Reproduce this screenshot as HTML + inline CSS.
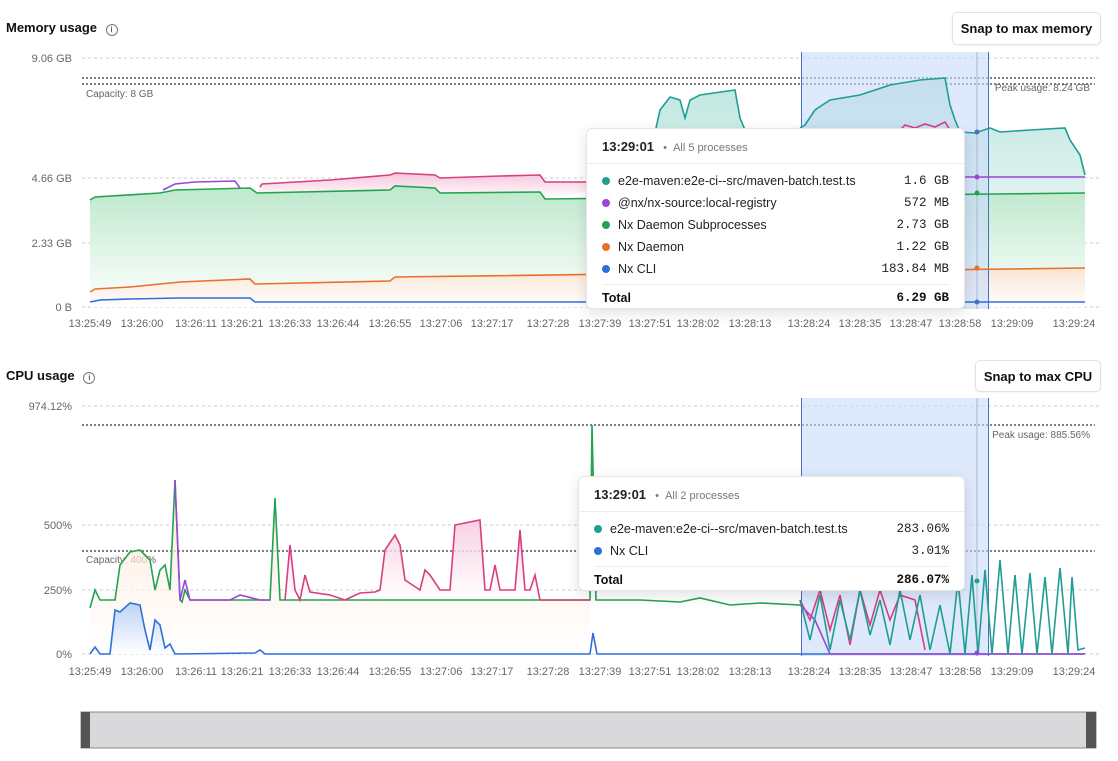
<!DOCTYPE html>
<html><head><meta charset="utf-8"><style>
body{margin:0;width:1118px;height:761px;background:#fff;font-family:"Liberation Sans",sans-serif;position:relative;overflow:hidden;color:#111}
.t{position:absolute;font-weight:bold;font-size:13px}
.btn{position:absolute;border:1px solid #e2e2e6;border-radius:5px;font-weight:bold;font-size:13px;display:flex;align-items:center;justify-content:center;background:#fff;box-shadow:0 1px 2px rgba(0,0,0,.05)}
.tip{position:absolute;background:#fff;border:1px solid #e6e6ea;border-radius:6px;box-shadow:0 4px 14px rgba(0,0,0,.12);font-size:12.5px}
.tip .h{padding:10px 15px 9px;border-bottom:1px solid #eee;font-size:11px;color:#777}
.tip .h b{color:#222;font-size:13px;margin-right:6px}
.row{display:flex;justify-content:space-between;padding:0 15px;height:22px;align-items:center;color:#222}
.row span.v{font-family:"Liberation Mono",monospace}
.dot{display:inline-block;width:8px;height:8px;border-radius:50%;margin-right:8px;vertical-align:0}
.tot{display:flex;justify-content:space-between;margin:4px 15px 0;border-top:1px solid #eee;padding-top:6px;font-weight:bold}
.tot span.v{font-family:"Liberation Mono",monospace}
svg text{font-family:"Liberation Sans",sans-serif;font-size:11px;fill:#666}
.ic{display:inline-block;width:10px;height:10px;border:1px solid #777;border-radius:50%;font-size:8px;text-align:center;line-height:10px;font-weight:normal;margin-left:5px;vertical-align:0px}
</style></head><body>
<div class="t" style="left:6px;top:20px">Memory usage <span class="ic">i</span></div>
<div class="btn" style="left:952px;top:12px;width:147px;height:31px">Snap to max memory</div>
<div class="t" style="left:6px;top:368px">CPU usage <span class="ic">i</span></div>
<div class="btn" style="left:975px;top:360px;width:124px;height:30px">Snap to max CPU</div>

<svg width="1118" height="761" style="position:absolute;left:0;top:0">
<defs>
<linearGradient id="gg" x1="0" y1="0" x2="0" y2="1"><stop offset="0" stop-color="#bde8cc"/><stop offset="1" stop-color="#fff"/></linearGradient>
<linearGradient id="go" x1="0" y1="0" x2="0" y2="1"><stop offset="0" stop-color="#fde0cc"/><stop offset="1" stop-color="#fff"/></linearGradient>
<linearGradient id="gt" x1="0" y1="0" x2="0" y2="1"><stop offset="0" stop-color="#bfe6df"/><stop offset="1" stop-color="#fff"/></linearGradient>
<linearGradient id="gp" x1="0" y1="0" x2="0" y2="1"><stop offset="0" stop-color="#f7c6dc"/><stop offset="1" stop-color="#fff"/></linearGradient>
<linearGradient id="gb" x1="0" y1="0" x2="0" y2="1"><stop offset="0" stop-color="#bcd3f5"/><stop offset="1" stop-color="#fff"/></linearGradient>
</defs>
<g stroke="#ccc" stroke-dasharray="3,3" stroke-width="1">
<line x1="82" y1="58" x2="1100" y2="58"/><line x1="82" y1="178" x2="1100" y2="178"/><line x1="82" y1="243" x2="1100" y2="243"/><line x1="82" y1="307" x2="1100" y2="307"/>
<line x1="82" y1="406" x2="1100" y2="406"/><line x1="82" y1="525" x2="1100" y2="525"/><line x1="82" y1="590" x2="1100" y2="590"/><line x1="82" y1="654" x2="1100" y2="654"/>
</g>
<g stroke="#555" stroke-dasharray="2,2" stroke-width="1.5">
<line x1="82" y1="78" x2="1095" y2="78"/><line x1="82" y1="84" x2="1095" y2="84"/>
<line x1="82" y1="425" x2="1095" y2="425"/><line x1="82" y1="551" x2="1095" y2="551"/>
</g>
<g text-anchor="end"><text x="72" y="62">9.06 GB</text><text x="72" y="182">4.66 GB</text><text x="72" y="247">2.33 GB</text><text x="72" y="311">0 B</text>
<text x="72" y="410">974.12%</text><text x="72" y="529">500%</text><text x="72" y="594">250%</text><text x="72" y="658">0%</text></g>
<text x="86" y="97" style="font-size:10px">Capacity: 8 GB</text>
<text x="1090" y="91" text-anchor="end" style="font-size:10px">Peak usage: 8.24 GB</text>
<text x="86" y="563" style="font-size:10px">Capacity: 400%</text>
<text x="1090" y="438" text-anchor="end" style="font-size:10px">Peak usage: 885.56%</text>

<!-- memory fills -->
<path d="M656,128 L660,110 L670,97 L680,100 L685,118 L690,100 L700,95 L735,90 L740,118 L745,130 L800,128 L805,125 L815,110 L830,100 L860,95 L890,85 L920,80 L945,78 L950,105 L955,120 L960,132 L975,133 L990,128 L1000,132 L1030,130 L1065,128 L1070,140 L1080,155 L1085,175 L1085,307 L656,307Z" fill="url(#gt)"/>
<path d="M90,200 L95,197 L160,193 L175,190 L250,188 L257,193 L390,190 L395,186 L435,188 L440,193 L540,192 L545,199 L1085,193 L1085,307 L90,307Z" fill="url(#gg)"/>
<path d="M260,187 L262,184 L330,180 L390,175 L395,173 L435,175 L440,178 L500,176 L540,175 L545,182 L586,182 L586,192 L545,199 L540,192 L440,193 L435,188 L395,186 L390,190 L257,193Z" fill="url(#gp)"/>
<path d="M90,292 L95,289 L130,287 L180,282 L250,279 L255,284 L390,281 L395,277 L1085,268 L1085,307 L90,307Z" fill="url(#go)" opacity=".8"/>
<!-- selection -->
<rect x="801" y="52" width="187" height="257" fill="#c8dbf8" opacity=".6"/>
<rect x="801" y="398" width="187" height="258" fill="#c8dbf8" opacity=".6"/>
<g stroke="#4a72b8" stroke-width="1"><line x1="801.5" y1="52" x2="801.5" y2="309"/><line x1="988.5" y1="52" x2="988.5" y2="309"/><line x1="801.5" y1="398" x2="801.5" y2="656"/><line x1="988.5" y1="398" x2="988.5" y2="656"/></g>
<line x1="977" y1="52" x2="977" y2="309" stroke="#aab8d0"/><line x1="977" y1="398" x2="977" y2="656" stroke="#aab8d0"/>
<!-- memory lines -->
<g fill="none" stroke-width="1.6">
<path d="M90,302 L100,300 L130,299 L180,298 L250,298 L255,302 L1085,302" stroke="#2e6fd9"/>
<path d="M90,292 L95,289 L130,287 L180,282 L250,279 L255,284 L390,281 L395,277 L1085,268" stroke="#e8702a"/>
<path d="M90,200 L95,197 L160,193 L175,190 L250,188 L257,193 L390,190 L395,186 L435,188 L440,193 L540,192 L545,199 L1085,193" stroke="#23a34f"/>
<path d="M260,187 L262,184 L330,180 L390,175 L395,173 L435,175 L440,178 L500,176 L540,175 L545,182 L586,182 M900,130 L905,125 L915,128 L925,124 L935,127 L945,122 L950,130" stroke="#d6407f"/>
<path d="M163,190 L175,184 L195,182 L235,181 L240,188 M964,177 L1085,177" stroke="#9b45d9"/>
<path d="M656,128 L660,110 L670,97 L680,100 L685,118 L690,100 L700,95 L735,90 L740,118 L745,130 M800,128 L805,125 L815,110 L830,100 L860,95 L890,85 L920,80 L945,78 L950,105 L955,120 L960,132 L975,133 L990,128 L1000,132 L1030,130 L1065,128 L1070,140 L1080,155 L1085,175" stroke="#1f9e93"/>
</g>
<!-- cpu fills -->
<path d="M90,608 L95,590 L100,600 L115,600 L120,565 L130,552 L140,550 L150,560 L155,590 L160,570 L165,565 L170,590 L175,480 L180,600 L270,600 L275,498 L280,600 L590,600 L590,654 L90,654Z" fill="url(#go)" opacity=".7"/>
<path d="M90,654 L95,647 L100,654 L110,654 L115,610 L120,612 L130,603 L140,605 L145,630 L150,650 L155,620 L160,625 L165,648 L170,644 L175,654 L1085,654Z" fill="url(#gb)"/>
<path d="M285,600 L290,545 L295,590 L300,600 L305,575 L310,592 L330,595 L345,600 L360,593 L375,592 L380,590 L385,550 L395,535 L400,545 L405,580 L420,590 L425,570 L430,575 L440,590 L450,590 L455,525 L480,520 L485,590 L490,590 L495,565 L500,590 L515,590 L520,530 L525,590 L530,590 L535,575 L540,600 L590,600 L285,600Z" fill="url(#gp)" opacity=".8"/>
<!-- cpu lines -->
<g fill="none" stroke-width="1.6">
<path d="M90,654 L95,647 L100,654 L110,654 L115,610 L120,612 L130,603 L140,605 L145,630 L150,650 L155,620 L160,625 L165,648 L170,644 L175,654 L255,653 L260,650 L265,654 L590,654 L593,633 L597,654 L1085,654" stroke="#2e6fd9"/>
<path d="M90,608 L95,590 L100,600 L115,600 L120,565 L130,552 L140,550 L150,560 L155,590 L160,570 L165,565 L170,590 L175,480 L180,600 L182,602 L185,590 L190,600 L270,600 L275,498 L280,600 L590,600 L592,425 L596,600 L640,600 L680,602 L700,598 L730,605 L760,603 L800,605" stroke="#23a34f"/>
<path d="M175,480 L180,600 L185,580 L190,600 L230,600 L240,595 L260,600 L270,600" stroke="#9b45d9"/>
<path d="M285,600 L290,545 L295,590 L300,600 L305,575 L310,592 L330,595 L345,600 L360,593 L375,592 L380,590 L385,550 L395,535 L400,545 L405,580 L420,590 L425,570 L430,575 L440,590 L450,590 L455,525 L480,520 L485,590 L490,590 L495,565 L500,590 L515,590 L520,530 L525,590 L530,590 L535,575 L540,600 L590,600 M800,600 L810,620 L820,590 L830,630 L840,595 L850,645 L860,590 L870,625 L880,590 L890,620 L900,595 L915,600 L925,650" stroke="#d6407f"/>
<path d="M800,605 L815,620 L830,654 L850,654 L1085,654" stroke="#9b45d9"/>
<path d="M800,600 L810,640 L820,595 L830,650 L840,600 L850,640 L860,590 L870,635 L880,600 L890,645 L900,590 L910,640 L920,595 L930,650 L940,605 L950,654 L958,580 L965,654 L972,575 L978,654 L985,570 L992,654 L1000,560 L1008,654 L1015,575 L1022,654 L1030,573 L1037,654 L1045,577 L1052,654 L1060,568 L1068,654 L1072,577 L1078,650 L1085,648" stroke="#1f9e93"/>
</g>
<g fill="#4a72b8"><circle cx="977" cy="132" r="2.5"/><circle cx="977" cy="177" r="2.5" fill="#9b45d9"/><circle cx="977" cy="193" r="2.5" fill="#23a34f"/><circle cx="977" cy="268" r="2.5" fill="#e8702a"/><circle cx="977" cy="302" r="2.5"/><circle cx="977" cy="581" r="2.5" fill="#1f9e93"/><circle cx="977" cy="653" r="2.5" fill="#9b45d9"/></g>
<g text-anchor="middle">
<text x="90" y="327">13:25:49</text><text x="142" y="327">13:26:00</text><text x="196" y="327">13:26:11</text><text x="242" y="327">13:26:21</text><text x="290" y="327">13:26:33</text><text x="338" y="327">13:26:44</text><text x="390" y="327">13:26:55</text><text x="441" y="327">13:27:06</text><text x="492" y="327">13:27:17</text><text x="548" y="327">13:27:28</text><text x="600" y="327">13:27:39</text><text x="650" y="327">13:27:51</text><text x="698" y="327">13:28:02</text><text x="750" y="327">13:28:13</text><text x="809" y="327">13:28:24</text><text x="860" y="327">13:28:35</text><text x="911" y="327">13:28:47</text><text x="960" y="327">13:28:58</text><text x="1012" y="327">13:29:09</text><text x="1074" y="327">13:29:24</text>
<text x="90" y="675">13:25:49</text><text x="142" y="675">13:26:00</text><text x="196" y="675">13:26:11</text><text x="242" y="675">13:26:21</text><text x="290" y="675">13:26:33</text><text x="338" y="675">13:26:44</text><text x="390" y="675">13:26:55</text><text x="441" y="675">13:27:06</text><text x="492" y="675">13:27:17</text><text x="548" y="675">13:27:28</text><text x="600" y="675">13:27:39</text><text x="650" y="675">13:27:51</text><text x="698" y="675">13:28:02</text><text x="750" y="675">13:28:13</text><text x="809" y="675">13:28:24</text><text x="860" y="675">13:28:35</text><text x="911" y="675">13:28:47</text><text x="960" y="675">13:28:58</text><text x="1012" y="675">13:29:09</text><text x="1074" y="675">13:29:24</text>
</g>
<rect x="81" y="712" width="1015" height="36" fill="#d9d9dc" stroke="#888"/>
<rect x="81" y="712" width="9" height="36" fill="#555"/><rect x="1086" y="712" width="10" height="36" fill="#555"/>
</svg>

<div class="tip" style="left:586px;top:128px;width:377px;height:179px">
<div class="h"><b>13:29:01</b> • &nbsp;All 5 processes</div>
<div style="height:6px"></div>
<div class="row"><span><i class="dot" style="background:#1f9e93"></i>e2e-maven:e2e-ci--src/maven-batch.test.ts</span><span class="v">1.6 GB</span></div>
<div class="row"><span><i class="dot" style="background:#9b45d9"></i>@nx/nx-source:local-registry</span><span class="v">572 MB</span></div>
<div class="row"><span><i class="dot" style="background:#23a34f"></i>Nx Daemon Subprocesses</span><span class="v">2.73 GB</span></div>
<div class="row"><span><i class="dot" style="background:#e8702a"></i>Nx Daemon</span><span class="v">1.22 GB</span></div>
<div class="row"><span><i class="dot" style="background:#2e6fd9"></i>Nx CLI</span><span class="v">183.84 MB</span></div>
<div class="tot"><span>Total</span><span class="v">6.29 GB</span></div>
</div>
<div class="tip" style="left:578px;top:476px;width:385px;height:113px">
<div class="h"><b>13:29:01</b> • &nbsp;All 2 processes</div>
<div style="height:6px"></div>
<div class="row"><span><i class="dot" style="background:#1f9e93"></i>e2e-maven:e2e-ci--src/maven-batch.test.ts</span><span class="v">283.06%</span></div>
<div class="row"><span><i class="dot" style="background:#2e6fd9"></i>Nx CLI</span><span class="v">3.01%</span></div>
<div class="tot"><span>Total</span><span class="v">286.07%</span></div>
</div>
</body></html>
